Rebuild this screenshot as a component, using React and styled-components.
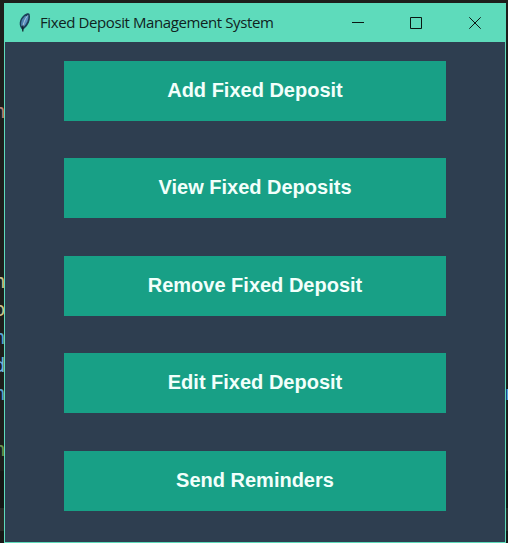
import React from "react";
import styled, { createGlobalStyle } from "styled-components";

const GlobalStyle = createGlobalStyle`
  * { box-sizing: border-box; }
  body { margin: 0; background: #1d1e1b; overflow: hidden; }
`;

const Desktop = styled.div`
  position: relative;
  width: 508px;
  height: 543px;
  padding: 3px 2px 0 4px;
  overflow: hidden;
  background: linear-gradient(#1d1e1b 0 471px, #151614 471px 508px, #292b28 508px 531px, #171816 531px);
`;

const CodeGlyph = styled.span`
  position: absolute;
  top: ${(p) => p.$top}px;
  left: ${(p) => p.$left}px;
  color: ${(p) => p.$color};
  font: 19px/24px "DejaVu Sans Mono", monospace;
`;

const Window = styled.main`
  position: relative;
  display: flex;
  flex-direction: column;
  width: 502px;
  height: 540px;
  border: 1px solid #5edbbb;
  border-top: 0;
  background: #2e3e50;
`;

const TitleBar = styled.header`
  display: flex;
  align-items: center;
  flex: 0 0 39px;
  margin: 0 -1px;
  padding-left: 13px;
  background: #5edbbb;
`;

const Title = styled.h1`
  flex: 1;
  margin: 0 0 0 7px;
  padding-bottom: 1px;
  color: #10231e;
  font: 400 15px/20px "Open Sans", "Noto Sans", sans-serif;
  letter-spacing: ${(p) => p.$tracking}px;
  white-space: nowrap;
`;

const Controls = styled.div`
  display: flex;
  padding-right: 1px;
`;

const ControlButton = styled.button`
  display: grid;
  place-items: center;
  width: ${(p) => p.$width}px;
  height: 39px;
  padding: 0;
  border: 0;
  background: none;
`;

const Menu = styled.nav`
  display: flex;
  flex-direction: column;
  gap: 37.5px;
  padding: 18.6px 59px 0;
`;

const MenuButton = styled.button`
  width: 382px;
  height: 60px;
  padding: 0 0 1.4px;
  border: 0;
  background: #18a086;
  color: #f2fffb;
  font: 700 20px/24px "Liberation Sans", Arial, sans-serif;
`;

const glyphs = [
  ["n", 99, "#b78379"],
  ["n", 269, "#c9c48f"],
  ["o", 297, "#c9c48f"],
  ["n", 325, "#58a5d5"],
  ["d", 353, "#6db4df"],
  ["n", 381, "#58a5d5"],
  ["n", 437, "#67954f"],
];

const actions = [
  "Add Fixed Deposit",
  "View Fixed Deposits",
  "Remove Fixed Deposit",
  "Edit Fixed Deposit",
  "Send Reminders",
];

function Feather() {
  return (
    <svg width="16" height="22" viewBox="0 0 16 22" aria-hidden="true">
      <path d="M5.5 18C1.2 14 2 7 7 3c2.2-1.8 5-2.2 5.6-1 1 3.2.2 8-2.4 11.5-1.2 1.8-2.7 3-4.7 4.5z" fill="#1b3f59" />
      <path d="M4.4 14C3.4 10 5 6.5 8.5 3.8l.9.6L6 14z" fill="#4d83af" />
      <path d="M7 14.5c3-3 4.7-7 4.5-11.5L9.2 5 7 11z" fill="#5a8fc0" />
      <path d="M10.5 3.5C8 7 6.5 11 5.8 15" fill="none" stroke="#b5d2e8" strokeWidth=".9" />
      <path d="M5.8 13.5v6" stroke="#10242c" strokeWidth="1.3" />
    </svg>
  );
}

function ControlIcon({ d }) {
  return (
    <svg width="13" height="13" viewBox="0 0 13 13" fill="none" stroke="#0a1713" strokeWidth="1" aria-hidden="true">
      <path d={d} />
    </svg>
  );
}

export default function App() {
  return (
    <>
      <GlobalStyle />
      <Desktop>
        {glyphs.map(([text, top, color]) => (
          <CodeGlyph key={top} $top={top} $left={-6} $color={color}>{text}</CodeGlyph>
        ))}
        <CodeGlyph $top={381} $left={505} $color="#58a5d5">n</CodeGlyph>
        <Window>
          <TitleBar>
            <Feather />
            <Title $tracking={-0.4}>Fixed Deposit Management System</Title>
            <Controls>
              <ControlButton $width={57} aria-label="Minimize"><ControlIcon d="M0 6.5h12" /></ControlButton>
              <ControlButton $width={59} aria-label="Maximize"><ControlIcon d="M.5 1.5h11v11h-11z" /></ControlButton>
              <ControlButton $width={59} aria-label="Close"><ControlIcon d="M.3 1.3l11.4 11.4M11.7 1.3L.3 12.7" /></ControlButton>
            </Controls>
          </TitleBar>
          <Menu>
            {actions.map((label) => (
              <MenuButton key={label}>{label}</MenuButton>
            ))}
          </Menu>
        </Window>
      </Desktop>
    </>
  );
}
